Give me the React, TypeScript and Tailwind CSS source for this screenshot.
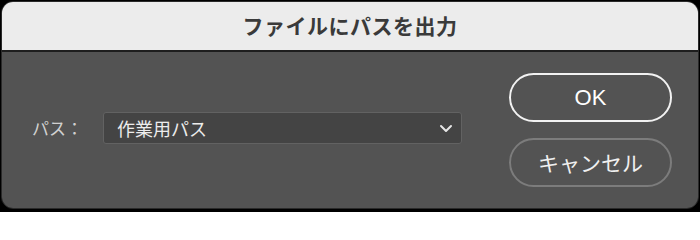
export default function App() {
  return (
    <div className="w-[700px] h-[212px] bg-black pt-[1px] px-[1px] font-['Liberation_Sans','Noto_Sans_CJK_JP',sans-serif]">
      <div className="h-[208px] flex flex-col rounded-[12px] overflow-hidden border border-[#2a2a2a]">
        {/* Title bar */}
        <div className="h-[50px] shrink-0 bg-[#ececec] border-b-2 border-[#1e1e1e] flex items-center justify-center">
          <span className="text-[21px] font-bold text-[#3a3a3a] tracking-[0.5px] font-['Noto_Sans_CJK_JP',sans-serif]">
            ファイルにパスを出力
          </span>
        </div>

        {/* Body */}
        <div className="flex-1 bg-[#535353] flex items-start justify-between pl-[30px] pr-[26px] pt-[21px]">
          <div className="flex items-center gap-[20px] mt-[39px]">
            <span className="text-[17px] text-[#d0d0d0] font-['Noto_Sans_CJK_JP',sans-serif]">パス：</span>
            <div className="w-[359px] h-[32px] rounded-[3px] bg-[#444444] border border-[#626262] flex items-center justify-between pl-[13px] pr-[8px]">
              <span className="text-[18px] text-[#ececec] font-['Noto_Sans_CJK_JP',sans-serif]">作業用パス</span>
              <svg width="14" height="9" viewBox="0 0 14 9" fill="none">
                <polyline points="2,2 7,7 12,2" stroke="#e6e6e6" strokeWidth="2" strokeLinecap="round" strokeLinejoin="round" />
              </svg>
            </div>
          </div>

          <div className="flex flex-col gap-[16px]">
            <button className="w-[163px] h-[49px] rounded-full border-2 border-[#f2f2f2] text-[22px] text-white flex items-center justify-center">
              OK
            </button>
            <button className="w-[163px] h-[49px] rounded-full border-2 border-[#7c7c7c] text-[21px] text-[#f0f0f0] flex items-center justify-center font-['Noto_Sans_CJK_JP',sans-serif]">
              キャンセル
            </button>
          </div>
        </div>
      </div>
    </div>
  );
}
